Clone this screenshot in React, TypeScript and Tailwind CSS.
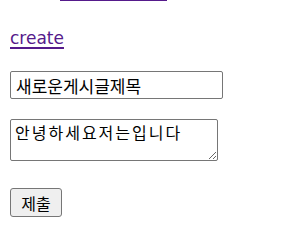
import { useState } from "react";

export default function App() {
	const [title, setTitle] = useState("새로운게시글제목");
	const [body, setBody] = useState("안녕하세요저는입니다");

	return (
		<div className="bg-white pl-[10px] font-['DejaVu_Sans','Noto_Sans_CJK_KR',sans-serif] text-black">
			{/* tail of the link scrolled above */}
			<div className="ml-[50px] h-px w-[107px] bg-[#551a8b]" />

			<a href="#" className="mt-[28px] block w-fit text-[17px] leading-[19px] text-[#551a8b] underline decoration-[1.5px] underline-offset-[3px]">
				create
			</a>

			<form className="mt-[23px]" onSubmit={(e) => e.preventDefault()}>
				<input
					type="text"
					value={title}
					onChange={(e) => setTitle(e.target.value)}
					className="block h-[28px] w-[213px] rounded-[2px] border border-[#767676] px-[5px] font-['Noto_Sans_CJK_KR',sans-serif] text-[17px] leading-[20px] outline-none"
				/>
				<textarea
					value={body}
					onChange={(e) => setBody(e.target.value)}
					className="mt-[20px] block h-[42px] w-[208px] rounded-[2px] border border-[#767676] px-[4px] pt-[2px] pb-0 font-['Noto_Sans_CJK_KR',monospace] text-[16px] leading-[21px] tracking-[2px] outline-none"
				/>
				<button
					type="submit"
					className="mt-[27px] block h-[29px] w-[52px] rounded-[3px] border border-[#767676] bg-[#efefef] font-['Noto_Sans_CJK_KR',sans-serif] text-[16px] leading-[20px]"
				>
					제출
				</button>
			</form>
		</div>
	);
}
